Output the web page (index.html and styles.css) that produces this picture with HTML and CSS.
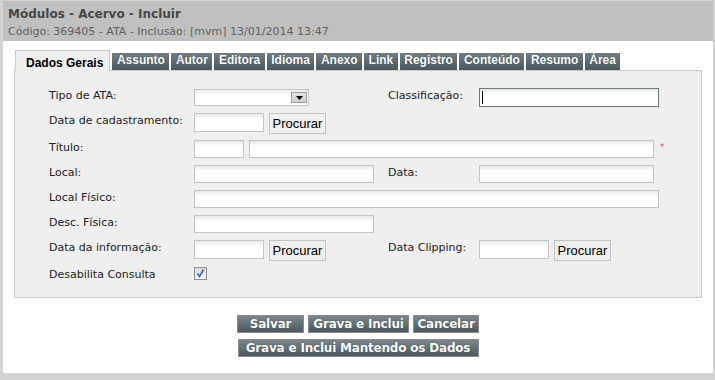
FILE: index.html
```html
<!DOCTYPE html>
<html lang="pt-BR">
<head>
<meta charset="utf-8" />
<title>Módulos - Acervo - Incluir</title>
<link rel="stylesheet" href="styles.css">
</head>
<body>
<div class="page">
	<div class="head">
		<h1>Módulos - Acervo - Incluir</h1>
		<p>Código: 369405 - ATA - Inclusão: [mvm] 13/01/2014 13:47</p>
	</div>
	<div class="content">
		<ul class="tabs">
			<li class="on">Dados Gerais</li>
			<li>Assunto</li>
			<li>Autor</li>
			<li>Editora</li>
			<li>Idioma</li>
			<li>Anexo</li>
			<li>Link</li>
			<li>Registro</li>
			<li>Conteúdo</li>
			<li>Resumo</li>
			<li>Área</li>
		</ul>
		<div class="panel">
			<div class="form">
				<label class="lbl">Tipo de ATA:</label>
				<div class="field">
					<span class="sel"><span class="arr"><svg width="7" height="4" viewBox="0 0 7 4"><path d="M0 0H7L3.5 4Z" fill="#000"/></svg></span></span>
				</div>
				<label class="lbl">Classificação:</label>
				<div class="field"><span class="cur"><input class="txt focus w180" type="text" /></span></div>

				<label class="lbl">Data de cadastramento:</label>
				<div class="field span3"><input class="txt date" type="text" /><button class="btn">Procurar</button></div>

				<label class="lbl">Título:</label>
				<div class="field span3"><input class="txt w50" type="text" /><input class="txt w405" type="text" /><span class="req">*</span></div>

				<label class="lbl">Local:</label>
				<div class="field"><input class="txt w180" type="text" /></div>
				<label class="lbl">Data:</label>
				<div class="field"><input class="txt w175" type="text" /></div>

				<label class="lbl">Local Físico:</label>
				<div class="field span3"><input class="txt w465" type="text" /></div>

				<label class="lbl">Desc. Física:</label>
				<div class="field span3"><input class="txt w180" type="text" /></div>

				<label class="lbl">Data da informação:</label>
				<div class="field"><input class="txt date" type="text" /><button class="btn">Procurar</button></div>
				<label class="lbl">Data Clipping:</label>
				<div class="field"><input class="txt date" type="text" /><button class="btn">Procurar</button></div>

				<label class="lbl">Desabilita Consulta</label>
				<div class="field span3">
					<span class="chk"><svg width="11" height="11" viewBox="0 0 11 11"><path d="M2.5 5.5L4.5 8.5L8.5 1.5" fill="none" stroke="#4465a8" stroke-width="1.6"/></svg></span>
				</div>
			</div>
		</div>
		<div class="actions">
			<div class="row">
				<button class="act w-salvar">Salvar</button>
				<button class="act w-grava">Grava e Inclui</button>
				<button class="act w-cancel">Cancelar</button>
			</div>
			<div class="row">
				<button class="act w-manter">Grava e Inclui Mantendo os Dados</button>
			</div>
		</div>
	</div>
</div>
</body>
</html>
```
FILE: styles.css
```css
*{ margin:0; padding:0; list-style:none; box-sizing:border-box;}
body{ background:#d3d3d3; font-family:"DejaVu Sans", Verdana, sans-serif; font-size:11px; color:#222;}
.page{ margin:1px 2px 0 3px; height:372px; background:#fff; box-shadow:0 1px 0 #c6c6c6;}

.head{ height:40px; background:#c0c0c0; padding:0 5px;}
.head h1{ font-size:12px; line-height:14px; padding-top:6px; color:#474747; font-weight:bold;}
.head p{ font-size:11px; line-height:13px; margin-top:4px; color:#616161;}

.content{ padding:9px 11px 0;}

.tabs{ display:flex; align-items:flex-end; height:20px; margin-left:1px; gap:2px;}
.tabs li{ height:17px; line-height:18px; padding:0 4.5px; font:bold 12px "Liberation Sans", Arial, sans-serif; color:#fff; background:linear-gradient(#717f85, #4a585e); text-shadow:0 0 1px #2c363a; overflow:hidden;}
.tabs li.on{ height:21px; line-height:17px; margin-bottom:-1px; padding:4px 6px 0 10px; color:#000; background:#efefef; border:1px solid #cacaca; border-bottom:none; text-shadow:none; position:relative; z-index:1;}

.panel{ background:#efefef; border:1px solid #cacaca; padding:17px 0 17px 34px; height:228px;}
.form{ display:grid; grid-template-columns:145px 194px 91px 1fr; grid-template-rows:18px 20px 18px 18px 18px 18px 20px 13px; row-gap:7px;}
.lbl{ line-height:15px; white-space:nowrap;}
.field{ display:flex; gap:5px; align-items:flex-start;}
.span3{ grid-column:span 3;}

.txt{ height:18px; border:1px solid #c4c4c4; background:linear-gradient(#e8e8e8, #fff 5px); font:11px "DejaVu Sans", sans-serif; padding:0 2px; outline:none;}
.txt.date{ width:70px; height:19px;}
.w50{ width:50px;}
.w180{ width:180px;}
.w175{ width:175px;}
.w405{ width:405px;}
.w465{ width:465px;}
.txt.focus{ height:19px; border-color:#67777d;}
.cur{ position:relative; display:block;}
.cur:after{ content:""; position:absolute; left:3px; top:3px; width:1px; height:13px; background:#000;}
.req{ color:#e4577e; font:11px "Liberation Sans", Arial, sans-serif; line-height:14px; margin-left:1px;}

.sel{ width:115px; height:17px; margin-top:1px; border:1px solid #c4c4c4; background:linear-gradient(#ececec, #fff 5px); display:flex; justify-content:flex-end; align-items:center;}
.sel .arr{ width:16px; height:11px; margin-right:1px; background:linear-gradient(#e4e4e4, #cfcfcf); border:1px solid #9c9c9c; display:flex; align-items:center; justify-content:center;}
.sel svg{ display:block;}

.btn{ width:57px; height:21px; border:1px solid #c2c2c2; background:#efefef; font:13px "Liberation Sans", Arial, sans-serif; color:#000; text-align:center;}

.chk{ width:13px; height:13px; border:1px solid #8f8f8f; background:linear-gradient(#dadada, #f5f5f5); display:flex; align-items:center; justify-content:center;}
.chk svg{ display:block;}

.actions{ padding-top:17px; display:flex; flex-direction:column; align-items:center; gap:6px;}
.actions .row{ display:flex; gap:4px;}
.act{ height:18px; border:1px solid #8a8a8a; background:linear-gradient(#7a888e, #4b595f); color:#fff; font:bold 12px "DejaVu Sans", Verdana, sans-serif; letter-spacing:-0.2px; line-height:16px; text-align:center; white-space:nowrap; text-shadow:0 0 1px #263034;}
.w-salvar{ width:67px;}
.w-grava{ width:101px;}
.w-cancel{ width:66px;}
.w-manter{ width:241px;}
```
